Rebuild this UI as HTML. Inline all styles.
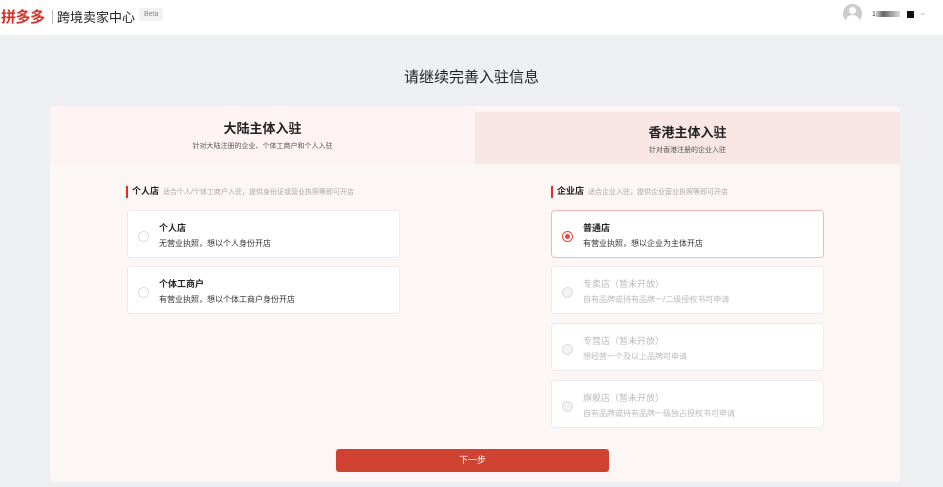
<!DOCTYPE html>
<html><head><meta charset="utf-8"><style>
*{margin:0;padding:0;box-sizing:border-box}
body{width:943px;height:487px;overflow:hidden;background:#eeeff2;font-family:"Liberation Sans","Noto Sans CJK SC",sans-serif;position:relative;color:#222}
.hd{position:absolute;left:0;top:0;width:943px;height:35px;background:#fff}
.logo{position:absolute;left:1px;top:6px;font-size:15px;font-weight:bold;color:#e02e24;letter-spacing:-0.5px}
.sep{position:absolute;left:52px;top:10px;width:1px;height:14px;background:#bbb}
.ttl{position:absolute;left:57px;top:7px;font-size:13px;color:#222}
.beta{position:absolute;left:139px;top:8px;font-size:7px;color:#888;background:#f2f2f2;padding:3px 5px;border-radius:2px}
.av{position:absolute;left:843px;top:4px;width:19px;height:19px;border-radius:50%;background:#ccc;overflow:hidden}
.av:before{content:"";position:absolute;left:6px;top:3px;width:7px;height:7px;border-radius:50%;background:#fff}
.av:after{content:"";position:absolute;left:3px;top:11px;width:13px;height:10px;border-radius:50% 50% 0 0;background:#fff}
.h1{position:absolute;top:66px;width:943px;text-align:center;font-size:15px;color:#222}
.card{position:absolute;left:50px;top:106px;width:850px;height:376px;background:#fcf6f5;border-radius:4px;overflow:hidden}
.tab1{position:absolute;left:0;top:0;width:425px;height:58px;background:#fdf3f2}
.tab2{position:absolute;left:425px;top:6px;width:425px;height:52px;background:#f8e6e4}
.tab{position:absolute;text-align:center;width:425px}
.tab b{display:block;font-size:13px;font-weight:bold;color:#222}
.tab i{display:block;font-style:normal;font-size:7px;color:#555;margin-top:4px}
.sh{position:absolute;font-size:9px;font-weight:bold;border-left:2px solid #e02e24;padding-left:4px;line-height:10px}
.sh span{font-weight:normal;font-size:7px;color:#aaa;margin-left:4px}
.opt{position:absolute;width:273px;height:48px;background:#fff;border:1px solid #f0ebea;border-radius:4px}
.opt .r{position:absolute;left:10px;top:20px;width:11px;height:11px;border-radius:50%;border:1px solid #ddd;background:#fff}
.opt b{position:absolute;left:31px;top:10px;font-size:9px;font-weight:bold;color:#222}
.opt i{position:absolute;left:31px;top:27px;font-style:normal;font-size:8px;color:#333}
.opt.dis b{font-weight:normal}
.opt.dis b,.opt.dis i{color:#bbb}
.opt.dis .r{background:#f3f3f3}
.opt.sel{border-color:#f1b9b3}
.opt.sel .r{border:1px solid #e24a3b;background:#fff}
.opt.sel .r:after{content:"";position:absolute;left:2px;top:2px;width:5px;height:5px;border-radius:50%;background:#e24a3b}
.btn{position:absolute;left:286px;top:343px;width:273px;height:23px;background:#d04333;border-radius:3px;color:#fff;font-size:9px;text-align:center;line-height:23px}
</style></head><body>
<div class="hd">
<div class="logo">拼多多</div><div class="sep"></div><div class="ttl">跨境卖家中心</div><div class="beta">Beta</div>
<div class="av"></div>
<div style="position:absolute;left:872px;top:11px;font-size:7px;color:#333">1</div>
<div style="position:absolute;left:876px;top:11px;width:24px;height:6px;background:linear-gradient(90deg,#ccc,#666 30%,#999 60%,#ddd)"></div>
<div style="position:absolute;left:907px;top:11px;width:7px;height:7px;background:#111"></div>
<div style="position:absolute;left:919px;top:8px;font-size:8px;color:#aaa">⌄</div>
</div>
<div class="h1">请继续完善入驻信息</div>
<div class="card">
<div class="tab1"></div>
<div class="tab2"></div>
<div class="tab" style="left:0;top:12px"><b>大陆主体入驻</b><i>针对大陆注册的企业、个体工商户和个人入驻</i></div>
<div class="tab" style="left:425px;top:16px"><b>香港主体入驻</b><i>针对香港注册的企业入驻</i></div>
<div class="sh" style="left:76px;top:80px">个人店<span>适合个人/个体工商户入驻，提供身份证或营业执照等即可开店</span></div>
<div class="opt" style="left:77px;top:104px"><div class="r"></div><b>个人店</b><i>无营业执照，想以个人身份开店</i></div>
<div class="opt" style="left:77px;top:160px"><div class="r"></div><b>个体工商户</b><i>有营业执照，想以个体工商户身份开店</i></div>
<div class="sh" style="left:501px;top:80px">企业店<span>适合企业入驻，提供企业营业执照等即可开店</span></div>
<div class="opt sel" style="left:501px;top:104px"><div class="r"></div><b>普通店</b><i>有营业执照，想以企业为主体开店</i></div>
<div class="opt dis" style="left:501px;top:160px"><div class="r"></div><b>专卖店（暂未开放）</b><i>自有品牌或持有品牌一/二级授权书可申请</i></div>
<div class="opt dis" style="left:501px;top:217px"><div class="r"></div><b>专营店（暂未开放）</b><i>想经营一个及以上品牌可申请</i></div>
<div class="opt dis" style="left:501px;top:274px"><div class="r"></div><b>旗舰店（暂未开放）</b><i>自有品牌或持有品牌一级独占授权书可申请</i></div>
<div class="btn">下一步</div>
</div>
</body></html>
